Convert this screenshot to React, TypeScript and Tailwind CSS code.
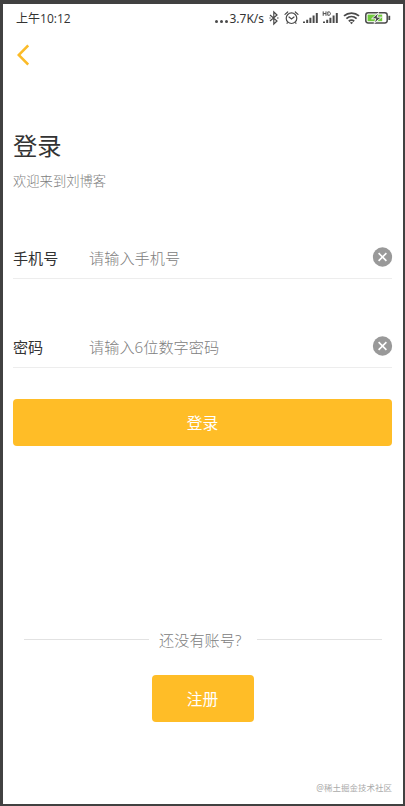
import React from 'react';

const BluetoothIcon = () => (
  <svg className="ml-[3px] h-4 w-[10px]" viewBox="0 0 10 16" fill="none" stroke="#4a4a4a" strokeWidth="1.2">
    <path d="M1 5 8 11 4.8 14V2L8 5 1 11" />
    <path d="M.4 8h1.2M8 8h1.6" />
  </svg>
);

const AlarmIcon = () => (
  <svg className="ml-[5px] h-4 w-[15px]" viewBox="0 0 15 16" fill="none" stroke="#4a4a4a" strokeWidth="1.2">
    <circle cx="7.5" cy="8.2" r="5.3" />
    <path d="m5 7 2.5 2L10 7M1 4.4 3.7 2M14 4.4 11.3 2" strokeLinecap="round" />
    <path d="m3.7 12.4-1 1.3M11.3 12.4l1 1.3" />
  </svg>
);

const SignalIcon = ({ hd = false }: { hd?: boolean }) => (
  <svg className="h-4 w-[17px]" viewBox="0 0 17 16" fill="#4a4a4a">
    <path d="M1 11.5h2V13H1zM4.2 9.8h2V13h-2zM7.4 7.8h2V13h-2zM10.6 5.4h2V13h-2zM13.8 3h2v10h-2z" />
    {hd && (
      <>
        <path d="M0 0h9.6v6.6H0z" fill="#fff" />
        <path d="M1.2 1.4v4.4M4 1.4v4.4M1.2 3.6H4M5.8 1.9h1c2.2 0 2.2 3.4 0 3.4h-1z" fill="none" stroke="#4a4a4a" />
      </>
    )}
  </svg>
);

const WifiIcon = () => (
  <svg className="ml-1 h-4 w-[17px]" viewBox="0 0 17 16" fill="none" stroke="#4a4a4a" strokeWidth="1.8">
    <path d="M1 5.9c4.3-3.8 10.7-3.8 15 0M3.4 8.6c3-2.6 7.2-2.6 10.2 0M5.8 11.2c1.6-1.3 3.8-1.3 5.4 0" />
    <path d="m8.5 14.2-1.6-1.7q1.6-1.2 3.2 0z" fill="#4a4a4a" stroke="none" />
  </svg>
);

const BatteryIcon = () => (
  <svg className="ml-[5px] h-4 w-[26px]" viewBox="0 0 26 16">
    <rect x=".8" y="2.8" width="21.4" height="10.2" rx="2.4" fill="#fff" stroke="#4a4a4a" strokeWidth="1.5" />
    <path d="M2.6 4.6h14.6v6.6H2.6z" fill="#70ca3c" />
    <path d="M23.4 5.8h1.8V10h-1.8z" fill="#4a4a4a" />
    <path d="M13.6 2.6 6.6 8.8h4.2L9 13.4l7.6-6.2h-4.4z" fill="#4a4a4a" stroke="#fff" strokeWidth=".9" />
  </svg>
);

const ClearIcon = () => (
  <svg className="size-5 translate-x-[0.5px]" viewBox="0 0 20 20">
    <circle cx="10" cy="10" r="9.7" fill="#999" />
    <path d="m6.1 6.1 7.8 7.8m0-7.8-7.8 7.8" stroke="#fff" strokeWidth="1.6" />
  </svg>
);

interface FieldProps {
  label: string;
  placeholder: string;
}

const Field: React.FC<FieldProps> = ({ label, placeholder }) => (
  <div className="flex h-[43px] items-center border-b border-[#ededed] text-[15.1px] leading-5">
    <span className="w-[76px] pt-px text-[#333]">{label}</span>
    <span className="flex-1 pt-px text-[15.2px] font-light text-[#808080]">{placeholder}</span>
    <ClearIcon />
  </div>
);

export default function App() {
  return (
    <div className="h-[806px] w-[405px] bg-[#414141] pt-1 pr-0.5 pb-0.5 pl-[3px] font-['Noto_Sans','Noto_Sans_CJK_SC',sans-serif]">
      <div className="flex h-full flex-col bg-white pr-[11px] pl-2.5">
        {/* Status bar */}
        <div className="flex h-7 items-center pr-[1.5px] pl-[3px] text-[#333]">
          <span className="flex-1 pt-px text-[12px] leading-4">
            上午<span className="font-['Open_Sans'] font-medium">10:12</span>
          </span>
          <span className="flex gap-[2px] pt-1.5 pr-px">
            <i className="size-[3px] rounded-full bg-[#4a4a4a]" />
            <i className="size-[3px] rounded-full bg-[#4a4a4a]" />
            <i className="size-[3px] rounded-full bg-[#4a4a4a]" />
          </span>
          <span className="w-[37px] pt-px pl-px text-[12px] leading-4 whitespace-nowrap">3.7K/s</span>
          <BluetoothIcon />
          <AlarmIcon />
          <span className="ml-[3px] flex gap-[3px]">
            <SignalIcon />
            <SignalIcon hd />
          </span>
          <WifiIcon />
          <BatteryIcon />
        </div>

        <svg className="mt-3 ml-1 h-[22px] w-3" viewBox="0 0 12 22" fill="none" stroke="#fbbb28" strokeWidth="2.5">
          <path d="M11.2 1.5 1.7 11l9.5 9.5" />
        </svg>

        <h1 className="mt-[62px] text-[24.3px] leading-9 text-[#333]">登录</h1>
        <p className="mt-[7px] text-[13.3px] leading-5 font-light text-[#808080]">欢迎来到刘博客</p>

        <div className="mt-[45px] flex flex-col gap-[46px]">
          <Field label="手机号" placeholder="请输入手机号" />
          <Field label="密码" placeholder="请输入6位数字密码" />
        </div>

        <button className="mt-[31px] h-[47px] rounded bg-[#ffbd27] pt-0.5 text-[15.8px] text-white">登录</button>

        <div className="mt-[183px] mr-2.5 ml-[11px] flex h-5 items-center text-[15.2px] leading-5 font-light text-[#808080]">
          <span className="h-px w-[125px] bg-[#e2e2e2]" />
          <span className="flex-1 pt-px pl-2.5 whitespace-nowrap">还没有账号?</span>
          <span className="h-px w-[125px] bg-[#e2e2e2]" />
        </div>
        <button className="mt-[26px] h-[47px] w-[102px] self-center rounded bg-[#ffbd27] pt-0.5 text-[15.8px] text-white">
          注册
        </button>

        <p className="mt-auto mb-2.5 self-end text-[8.5px] leading-3 text-[#aaa]">@稀土掘金技术社区</p>
      </div>
    </div>
  );
}
